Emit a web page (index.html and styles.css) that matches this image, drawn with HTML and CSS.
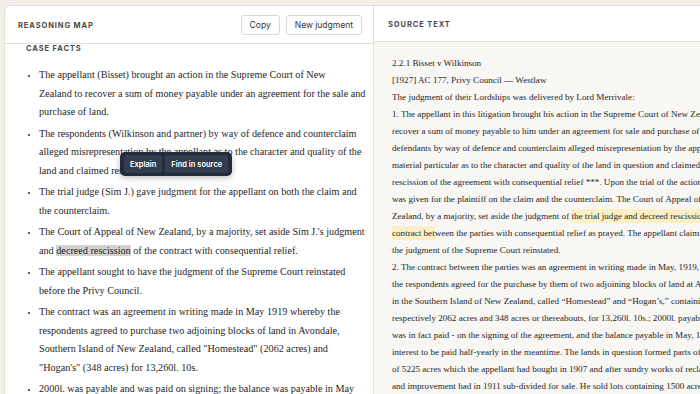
FILE: index.html
```html
<!DOCTYPE html>
<html lang="en">
<head>
    <meta charset="UTF-8">
    <meta name="viewport" content="width=device-width, initial-scale=1.0">
    <title>Reasoning map</title>
    <link rel="stylesheet" href="styles.css">
</head>
<body>
    <div class="app">
        <section class="panel map">
            <header class="panel-head">
                <h2 class="panel-title">Reasoning map</h2>
                <div class="actions">
                    <button class="btn">Copy</button>
                    <button class="btn">New judgment</button>
                </div>
            </header>
            <div class="panel-body map-body">
                <h3 class="section-title">Case facts</h3>
                <ul class="facts">
                    <li>The appellant (Bisset) brought an action in the Supreme Court of New<br>
                        Zealand to recover a sum of money payable under an agreement for the sale and<br>
                        purchase of land.</li>
                    <li>The respondents (Wilkinson and partner) by way of defence and counterclaim<br>
                        alleged misrepresentation by the appellant as to the character and quality of the<br>
                        land and claimed rescission.</li>
                    <li>The trial judge (Sim J.) gave judgment for the appellant on both the claim and<br>
                        the counterclaim.</li>
                    <li>The Court of Appeal of New Zealand, by a majority, set aside Sim J.'s judgment<br>
                        and <span class="selected">decreed rescission</span> of the contract with consequential relief.</li>
                    <li>The appellant sought to have the judgment of the Supreme Court reinstated<br>
                        before the Privy Council.</li>
                    <li>The contract was an agreement in writing made in May 1919 whereby the<br>
                        respondents agreed to purchase two adjoining blocks of land in Avondale,<br>
                        Southern Island of New Zealand, called "Homestead" (2062 acres) and<br>
                        "Hogan's" (348 acres) for 13,260l. 10s.</li>
                    <li>2000l. was payable and was paid on signing; the balance was payable in May<br>
                        1924, with interest half-yearly in the meantime.</li>
                </ul>
                <div class="popover">
                    <button class="pop-btn">Explain</button>
                    <button class="pop-btn">Find in source</button>
                </div>
            </div>
        </section>

        <section class="panel source">
            <header class="panel-head">
                <h2 class="panel-title">Source text</h2>
            </header>
            <div class="panel-body source-body">
                <p>2.2.1 Bisset v Wilkinson</p>
                <p>[1927] AC 177, Privy Council — Westlaw</p>
                <p>The judgment of their Lordships was delivered by Lord Merrivale:</p>
                <p>1. The appellant in this litigation brought his action in the Supreme Court of New Zealand to<br>
                recover a sum of money payable to him under an agreement for sale and purchase of land. The<br>
                defendants by way of defence and counterclaim alleged misrepresentation by the appellant in a<br>
                material particular as to the character and quality of the land in question and claimed<br>
                rescission of the agreement with consequential relief ***. Upon the trial of the action judgment<br>
                was given for the plaintiff on the claim and the counterclaim. The Court of Appeal of New<br>
                Zealand, by a majority, set aside the judgment of <mark class="match">the trial judge and decreed rescission of the<br>
                contract bet</mark>ween the parties with consequential relief as prayed. The appellant claims to have<br>
                the judgment of the Supreme Court reinstated.</p>
                <p>2. The contract between the parties was an agreement in writing made in May, 1919, whereby<br>
                the respondents agreed for the purchase by them of two adjoining blocks of land at Avondale,<br>
                in the Southern Island of New Zealand, called “Homestead” and “Hogan’s,” containing<br>
                respectively 2062 acres and 348 acres or thereabouts, for 13,260l. 10s.; 2000l. payable - which<br>
                was in fact paid - on the signing of the agreement, and the balance payable in May, 1924,<br>
                interest to be paid half-yearly in the meantime. The lands in question formed parts of an area<br>
                of 5225 acres which the appellant had bought in 1907 and after sundry works of reclamation<br>
                and improvement had in 1911 sub-divided for sale. He sold lots containing 1500 acres and</p>
            </div>
        </section>
    </div>
</body>
</html>
```

FILE: styles.css
```css
body {
    margin: 0;
    height: 100vh;
    overflow: hidden;
    background-color: #f2efe9;
    font-family: "Liberation Serif", "Times New Roman", serif;
    color: #262626;
}
.app {
    display: flex;
    width: 800px;
    height: calc(100vh - 5px);
    padding: 5px 0 0 4px;
}
.panel {
    display: flex;
    flex-direction: column;
    min-height: 0;
    background-color: #fff;
    border: 1px solid #e3dfd8;
    border-bottom: none;
}
.map {
    width: 368px;
    border-radius: 6px 0 0 0;
}
.source {
    flex: 1;
    border-left: none;
}
.panel-head {
    display: flex;
    align-items: center;
    justify-content: space-between;
    padding: 9px 11px 8px 13px;
    border-bottom: 1px solid #e3dfd8;
    flex-shrink: 0;
}
.source .panel-head {
    padding: 9px 14px 7px;
    height: 19px;
}
.panel-title {
    margin: 0;
    font-family: Inter, "Liberation Sans", sans-serif;
    font-size: 7.5px;
    font-weight: 700;
    letter-spacing: 0.9px;
    text-transform: uppercase;
    color: #4a4a4a;
}
.actions {
    display: flex;
    gap: 6px;
}
.btn {
    height: 20px;
    padding: 0 8px;
    font-family: Inter, "Liberation Sans", sans-serif;
    font-size: 8.5px;
    color: #333;
    background-color: #fff;
    border: 1px solid #dcd8d0;
    border-radius: 3px;
    cursor: pointer;
}
.btn:hover {
    background-color: #f7f5f1;
}

.panel-body {
    flex: 1;
    min-height: 0;
}
.map-body {
    position: relative;
    overflow-x: hidden;
    overflow-y: scroll;
    padding: 0 2px 0 21px;
}
.map-body::-webkit-scrollbar {
    width: 8px;
}
.map-body::-webkit-scrollbar-track {
    background-color: #fff;
}
.map-body::-webkit-scrollbar-thumb {
    background-color: #8c8c8c;
    border: 1px solid #fff;
    border-radius: 4px;
}
.map-body::-webkit-scrollbar-button:single-button {
    display: block;
    height: 13px;
    background-repeat: no-repeat;
    background-position: center;
}
.map-body::-webkit-scrollbar-button:single-button:vertical:decrement {
    background-image: url("data:image/svg+xml;utf8,<svg xmlns='http://www.w3.org/2000/svg' width='5' height='4'><path d='M2.5 0 5 4H0z' fill='%23a0a0a0'/></svg>");
}
.map-body::-webkit-scrollbar-button:single-button:vertical:increment {
    background-image: url("data:image/svg+xml;utf8,<svg xmlns='http://www.w3.org/2000/svg' width='5' height='4'><path d='M0 0H5L2.5 4z' fill='%23a0a0a0'/></svg>");
}
.section-title {
    margin: 0;
    font-family: Inter, "Liberation Sans", sans-serif;
    font-size: 7.5px;
    line-height: 9px;
    font-weight: 700;
    letter-spacing: 0.9px;
    text-transform: uppercase;
    color: #4a4a4a;
}
.facts {
    margin: 13px 0 0;
    padding-left: 13px;
    font-size: 10.2px;
    line-height: 18.5px;
    white-space: nowrap;
}
.facts li {
    margin-bottom: 3px;
}
.facts li::marker {
    font-size: 8px;
}
.selected {
    background-color: #d2d2d2;
}
.popover {
    position: absolute;
    left: 115px;
    top: 108px;
    display: flex;
    gap: 3px;
    padding: 3px 4px;
    background-color: #232c3b;
    border-radius: 5px;
    box-shadow: 0 2px 6px rgba(0, 0, 0, 0.25);
}
.pop-btn {
    height: 18px;
    padding: 0 6px;
    font-family: Inter, "Liberation Sans", sans-serif;
    font-size: 7.5px;
    font-weight: 600;
    color: #fff;
    background-color: #323d50;
    border: none;
    border-radius: 3px;
    cursor: pointer;
}

.source-body {
    overflow: hidden;
    padding: 13px 18px 0;
    background-color: #f8f7f4;
    font-size: 9.1px;
    line-height: 17px;
    white-space: nowrap;
}
.source-body p {
    margin: 0;
}
.match {
    color: inherit;
    background-color: #fcefc6;
    border-radius: 2px;
    padding: 2px 0;
}
```
